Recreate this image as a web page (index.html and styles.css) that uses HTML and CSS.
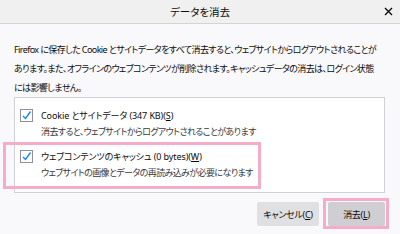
FILE: index.html
```html
<!DOCTYPE html>
<html lang="ja">
<head>
  <meta charset="UTF-8">
  <title>データを消去</title>
  <link rel="stylesheet" href="styles.css">
</head>
<body>
  <div class="dialog">
    <div class="titlebar">
      <span></span>
      <span class="title">データを消去</span>
      <span class="close">
        <svg width="9" height="9" viewBox="0 0 9 9"><path d="M1 1L8 8M8 1L1 8" stroke="#0c0c0d" stroke-width="1.4"/></svg>
      </span>
    </div>

    <div class="content">
      <p class="intro">Firefox に保存した Cookie とサイトデータをすべて消去すると、ウェブサイトからログアウトされることが<br>あります。また、オフラインのウェブコンテンツが削除されます。キャッシュデータの消去は、ログイン状態<br>には影響しません。</p>

      <div class="group">
        <div class="option">
          <span class="check"><svg width="11" height="11" viewBox="0 0 11 11"><path d="M2 6L4.5 8.5L9.5 1.5" fill="none" stroke="#0a84ff" stroke-width="1.3"/></svg></span>
          <div>
            <div class="label">Cookie とサイトデータ (347 KB)(<u>S</u>)</div>
            <div class="desc">消去すると、ウェブサイトからログアウトされることがあります</div>
          </div>
        </div>
        <div class="option">
          <span class="check"><svg width="11" height="11" viewBox="0 0 11 11"><path d="M2 6L4.5 8.5L9.5 1.5" fill="none" stroke="#0a84ff" stroke-width="1.3"/></svg></span>
          <div>
            <div class="label">ウェブコンテンツのキャッシュ (0 bytes)(<u>W</u>)</div>
            <div class="desc">ウェブサイトの画像とデータの再読み込みが必要になります</div>
          </div>
        </div>
      </div>

      <div class="buttons">
        <button class="btn cancel">キャンセル(<u>C</u>)</button>
        <button class="btn primary">消去(<u>L</u>)</button>
      </div>
    </div>

    <!-- ハイライト枠 -->
    <div class="mark mark-cache"></div>
    <div class="mark mark-clear"></div>
  </div>
</body>
</html>
```

FILE: styles.css
```css
body {
  margin: 0;
  font-family: "Noto Sans", "Noto Sans CJK JP", sans-serif;
  font-feature-settings: "palt";
  font-size: 9px;
  letter-spacing: -0.6px;
  color: #0c0c0d;
  background-color: #f9f9fb;
}
.dialog {
  position: relative;
  width: 400px;
  height: 234px;
  overflow: hidden;
}
.titlebar {
  display: grid;
  grid-template-columns: 1fr auto 1fr;
  align-items: center;
  height: 23px;
  background-color: #f0f0f0;
  border-bottom: 1px solid #d4d4d4;
}
.title {
  font-size: 10.5px;
  letter-spacing: 0;
}
.close {
  justify-self: end;
  display: flex;
  padding-right: 7px;
}
.content {
  padding: 16px 15px 0 14px;
}
.intro {
  margin: 0;
  line-height: 19px;
  white-space: nowrap;
}
.group {
  height: 84px;
  background-color: #fff;
  border: 1px solid #d0d0d7;
  padding: 10px 5px 0;
}
.option {
  display: flex;
  align-items: flex-start;
  height: 41px;
}
.check {
  display: flex;
  align-items: center;
  justify-content: center;
  width: 11px;
  height: 11px;
  margin-top: 1px;
  margin-right: 8px;
  border: 1px solid #8f8f9d;
  background-color: #fff;
}
.label {
  line-height: 16px;
  letter-spacing: -0.1px;
}
.desc {
  line-height: 16px;
  color: #38383d;
}
.buttons {
  display: flex;
  justify-content: flex-end;
  gap: 9px;
  margin-top: 9px;
}
.btn {
  font-family: inherit;
  font-feature-settings: "palt";
  font-size: 9px;
  letter-spacing: -0.3px;
  color: #0c0c0d;
  height: 24px;
  border: none;
  border-radius: 2px;
  background-color: #e0e0e3;
  padding: 0;
}
.btn.cancel {
  width: 62px;
}
.btn.primary {
  width: 57px;
  background-color: #cfcfd3;
}
.mark {
  position: absolute;
  border: 3px solid #f6abc9;
}
.mark-cache {
  left: 3px;
  top: 142px;
  width: 252px;
  height: 41px;
}
.mark-clear {
  left: 323px;
  top: 198px;
  width: 60px;
  height: 25px;
}
```
